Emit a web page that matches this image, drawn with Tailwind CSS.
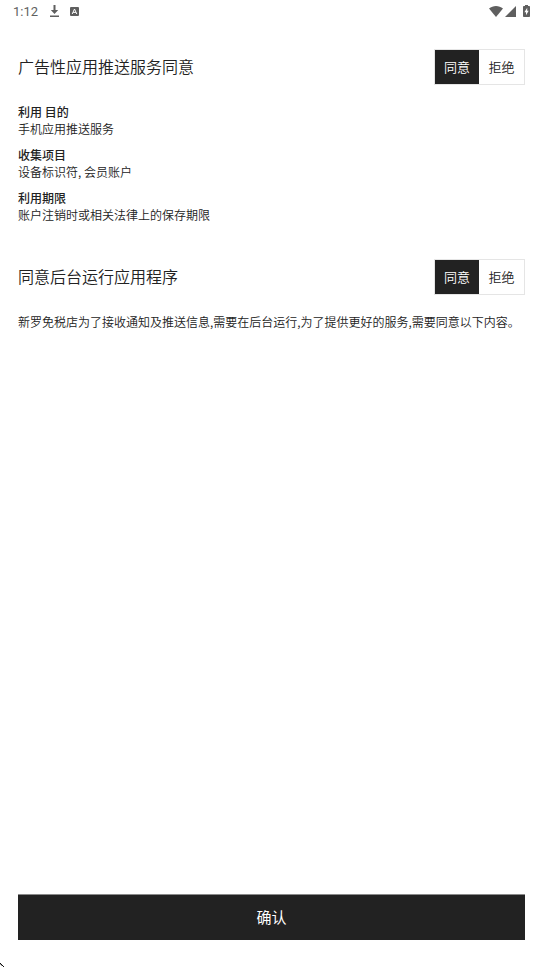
<!DOCTYPE html>
<html lang="zh-CN">
  <head>
    <meta charset="UTF-8" />
    <meta name="viewport" content="width=device-width, initial-scale=1.0" />
    <title>应用推送服务同意</title>

    <!-- Tailwind CSS -->
    <script src="https://cdn.jsdelivr.net/npm/@tailwindcss/browser@4"></script>
  </head>

  <body
    class="relative flex min-h-screen flex-col bg-white font-['Noto_Sans_CJK_SC',sans-serif] text-xs leading-[17px] font-[350] text-[#222222]"
  >
    <!-- Status Bar -->
    <header class="flex h-[22px] items-center justify-between px-[13px] text-[#5f5f5f]">
      <div class="flex items-center">
        <time class="mr-3 font-[Roboto,sans-serif] text-[13px] font-normal">1:12</time>
        <svg class="mr-[11px] h-3 w-[9px]" viewBox="0 0 9 12" fill="currentColor" aria-hidden="true">
          <path d="M3.5 0h2v5H8.2L4.5 9 .8 5h2.7zM0 10.5h9V12H0z" />
        </svg>
        <svg class="h-[9px] w-[9px]" viewBox="0 0 9 9" aria-hidden="true">
          <rect width="9" height="9" rx="1" fill="currentColor" />
          <path d="M2.2 7 4.5 2 6.8 7M3.1 5.4h2.8" fill="none" stroke="#fff" stroke-width="1" />
        </svg>
      </div>
      <div class="flex items-center">
        <svg class="h-[11px] w-[14px]" viewBox="0 0 14 11" fill="currentColor" aria-hidden="true">
          <path d="M0 2.6C4-.8 10-.8 14 2.6L7 11z" />
        </svg>
        <svg class="ml-[2px] h-[11px] w-[11px]" viewBox="0 0 11 11" fill="currentColor" aria-hidden="true">
          <path d="M11 0v11H0z" />
        </svg>
        <svg class="ml-[7px] h-3 w-[7px]" viewBox="0 0 7 12" aria-hidden="true">
          <path d="M2 0h3v1h1.2q.8 0 .8.8v9.4q0 .8-.8.8H.8Q0 12 0 11.2V1.8Q0 1 .8 1H2z" fill="currentColor" />
          <path d="M4.2 2.8 1.4 7.2H3v3l2.7-4.4H4.2z" fill="#fff" />
        </svg>
      </div>
    </header>

    <main class="flex-1 space-y-9 px-[18px] pt-[27px]">
      <!-- Push Consent -->
      <section>
        <div class="flex items-center justify-between">
          <h2 id="push-title" class="pb-[2px] text-base font-[350]">广告性应用推送服务同意</h2>
          <div
            role="radiogroup"
            aria-labelledby="push-title"
            class="flex h-9 border border-[#e5e5e5] text-[13px]"
          >
            <label class="flex w-11 cursor-pointer items-center justify-center pb-[2px] has-checked:bg-[#222222] has-checked:text-white">
              <input type="radio" name="push" value="agree" class="sr-only" checked />同意
            </label>
            <label class="flex w-[45px] cursor-pointer items-center justify-center pb-[2px] has-checked:bg-[#222222] has-checked:text-white">
              <input type="radio" name="push" value="refuse" class="sr-only" />拒绝
            </label>
          </div>
        </div>
        <dl class="mt-[18px] space-y-[9px]">
          <div>
            <dt class="font-medium">利用 目的</dt>
            <dd>手机应用推送服务</dd>
          </div>
          <div>
            <dt class="font-medium">收集项目</dt>
            <dd>设备标识符, 会员账户</dd>
          </div>
          <div>
            <dt class="font-medium">利用期限</dt>
            <dd>账户注销时或相关法律上的保存期限</dd>
          </div>
        </dl>
      </section>

      <!-- Background Consent -->
      <section>
        <div class="flex items-center justify-between">
          <h2 id="background-title" class="pb-[2px] text-base font-[350]">同意后台运行应用程序</h2>
          <div
            role="radiogroup"
            aria-labelledby="background-title"
            class="flex h-9 border border-[#e5e5e5] text-[13px]"
          >
            <label class="flex w-11 cursor-pointer items-center justify-center pb-[2px] has-checked:bg-[#222222] has-checked:text-white">
              <input type="radio" name="background" value="agree" class="sr-only" checked />同意
            </label>
            <label class="flex w-[45px] cursor-pointer items-center justify-center pb-[2px] has-checked:bg-[#222222] has-checked:text-white">
              <input type="radio" name="background" value="refuse" class="sr-only" />拒绝
            </label>
          </div>
        </div>
        <p class="mt-[18px]">
          新罗免税店为了接收通知及推送信息,需要在后台运行,为了提供更好的服务,需要同意以下内容。
        </p>
      </section>
    </main>

    <!-- Confirm -->
    <footer class="px-[18px] pb-[27px]">
      <button
        type="button"
        class="h-[46px] w-full cursor-pointer border-t border-[#8a8a8a] bg-[#222222] pb-[2px] text-[15px] font-normal text-white"
      >
        确认
      </button>
    </footer>

    <!-- Pointer -->
    <svg class="absolute bottom-0 left-0 h-[4px] w-[4px]" viewBox="0 0 4 4" shape-rendering="crispEdges" aria-hidden="true">
      <path d="M0 0h1v1H0zM1 1h1v1H1zM2 2h1v1H2zM3 3h1v1H3z" fill="#111" />
      <path d="M0 1h1v1H0zM1 2h1v1H1z" fill="#999" />
    </svg>
  </body>
</html>
